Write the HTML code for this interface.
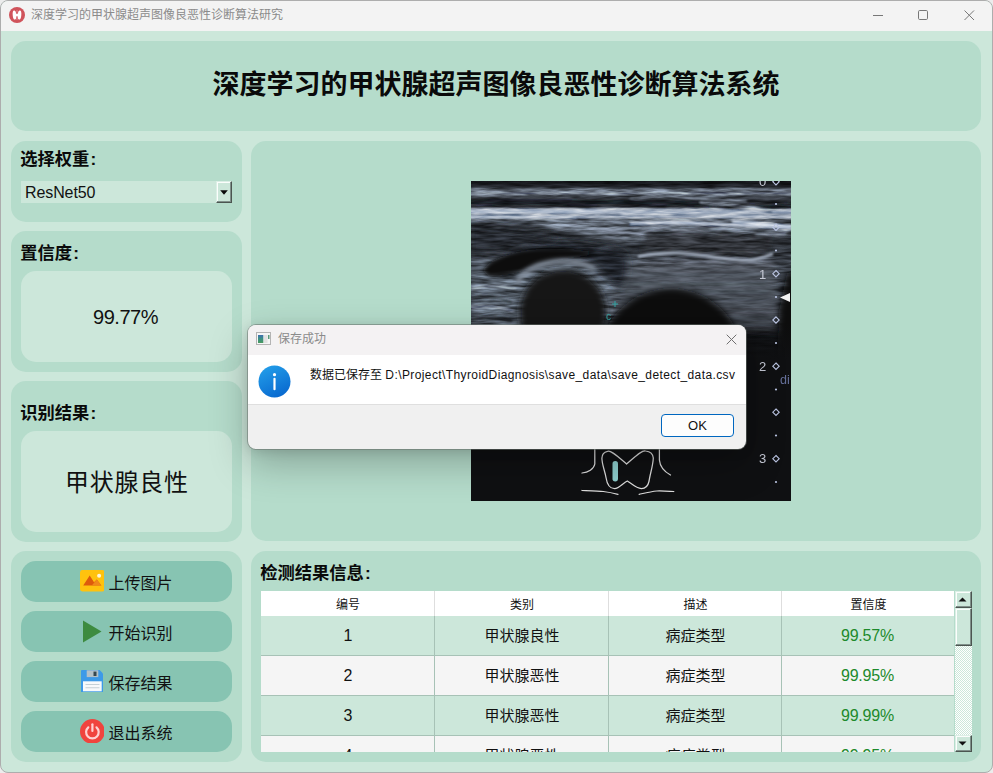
<!DOCTYPE html>
<html lang="zh-CN">
<head>
<meta charset="utf-8">
<title>深度学习的甲状腺超声图像良恶性诊断算法研究</title>
<style>
html,body{margin:0;padding:0;}
body{width:993px;height:773px;overflow:hidden;background:#ececec;font-family:"Liberation Sans","Noto Sans CJK SC",sans-serif;color:#000;}
#win{position:absolute;left:0;top:0;width:991px;height:771px;border:1px solid #adadad;border-radius:8px;background:#cce7da;overflow:hidden;}
.abs{position:absolute;}
#tbar{position:absolute;left:0;top:0;width:991px;height:30px;background:#f3f3f3;}
#ttext{position:absolute;left:30px;top:0;height:30px;line-height:29px;font-size:12px;color:#8b8b8b;white-space:nowrap;}
.panel{position:absolute;background:#b5dccb;border-radius:15px;}
.lbl i{font-style:normal;margin-left:1.200px;}
.lbl{position:absolute;font-weight:bold;font-size:17.300px;margin-left:-.8px;line-height:20px;white-space:nowrap;color:#0a0a0a;}
.inner{position:absolute;background:#cce7da;border-radius:15px;text-align:center;white-space:nowrap;}
.btn{position:absolute;left:20px;width:211px;height:41px;background:#87c4b2;border-radius:15px;}
.btn span{position:absolute;left:87.500px;top:1px;line-height:43px;font-size:16px;white-space:nowrap;color:#111;}
.btn svg{position:absolute;}
#title{position:absolute;left:0;top:0;width:970px;height:90px;line-height:88px;text-align:center;font-weight:bold;font-size:27px;color:#0a0a0a;white-space:nowrap;}
/* table */
#tbl{position:absolute;left:260px;top:590px;width:693px;height:161px;overflow:hidden;background:#cce7da;}
.th{position:absolute;top:0;height:25px;line-height:28px;background:#fff;font-size:12px;text-align:center;color:#111;}
.row{position:absolute;left:0;width:694px;height:39px;border-bottom:1px solid #a7c2b6;}
.row.a{background:#cce7da;}
.row.b{background:#f5f5f5;}
.cell{position:absolute;top:0;height:39px;line-height:39px;text-align:center;font-size:15px;color:#111;white-space:nowrap;}
.cell.g{color:#1d8a2b;font-size:16px;letter-spacing:-.2px;text-indent:-2px;}
.vl{position:absolute;top:25px;width:1px;height:136px;background:#a7c2b6;}
.hl{position:absolute;top:0;width:1px;height:25px;background:#dedede;}
.cell.n{font-size:16px;}
/* scrollbar */
#sb{position:absolute;left:954px;top:590px;width:17px;height:161px;background:repeating-conic-gradient(#ffffff 0% 25%, #cce7da 0% 50%) 0 0/2px 2px;}
.sbb{position:absolute;left:0;width:15px;background:#cce7da;border:1px solid;border-color:#dcefe6 #4b5550 #4b5550 #dcefe6;box-shadow:inset -1px -1px 0 #80908a,inset 1px 1px 0 #fbfefc;}
/* dialog */
#dlg{position:absolute;left:247px;top:324px;width:498px;height:124px;border-radius:8px;background:#f0f0f0;overflow:hidden;box-shadow:0 0 0 1px rgba(105,115,110,.55),0 14px 38px rgba(0,0,0,.26),0 2px 12px rgba(0,0,0,.12);}
#dtb{position:absolute;left:0;top:0;width:498px;height:30px;background:#f4f2f3;}
#dbody{position:absolute;left:0;top:30px;width:498px;height:49px;background:#fff;border-bottom:1px solid #dfdfdf;}
#dmsg{position:absolute;left:62px;top:0;line-height:40px;font-size:12px;white-space:nowrap;color:#111;letter-spacing:0px;}
#ok{position:absolute;left:413px;top:89px;width:71px;height:21px;border:1px solid #0067c0;border-radius:4px;background:#fdfdfd;text-align:center;line-height:21px;font-size:13px;color:#111;}
</style>
</head>
<body>
<div id="win">
  <div id="tbar">
    <svg class="abs" style="left:7px;top:5px" width="18" height="18" viewBox="0 0 18 18">
      <circle cx="9" cy="9" r="8" fill="#d0535b"/>
      <g fill="#fff">
        <ellipse cx="6.500" cy="9" rx="1.800" ry="4.600" transform="rotate(-5 6.500 9)"/>
        <ellipse cx="11.500" cy="9" rx="1.800" ry="4.600" transform="rotate(5 11.500 9)"/>
        <path d="M6.500 6.600 L9 8 L11.500 6.600 V11.400 L9 10 L6.500 11.400z"/>
      </g>
      <path d="M9 4.200v2.400M9 11.600v2.400" stroke="#e9a0a4" stroke-width=".8"/>
    </svg>
    <div id="ttext">深度学习的甲状腺超声图像良恶性诊断算法研究</div>
    <svg class="abs" style="left:860px;top:0" width="131" height="30" viewBox="0 0 131 30" fill="none" stroke="#777" stroke-width="1">
      <path d="M12 14.500h10"/>
      <rect x="57.500" y="9.500" width="9" height="9" rx="1.200"/>
      <path d="M103.500 9.500l9.500 9.500M113 9.500l-9.500 9.500"/>
    </svg>
  </div>

  <!-- header -->
  <div class="panel" style="left:10px;top:40px;width:970px;height:90px;">
    <div id="title">深度学习的甲状腺超声图像良恶性诊断算法系统</div>
  </div>

  <!-- left 1 -->
  <div class="panel" style="left:10px;top:140px;width:231px;height:81px;">
    <div class="lbl" style="left:10px;top:8px;">选择权重<i>:</i></div>
    <div class="abs" style="left:10px;top:40px;width:211px;height:22px;background:#cce7da;">
      <div class="abs" style="left:4px;top:0;line-height:24px;font-size:16px;color:#111;letter-spacing:-.1px;">ResNet50</div>
      <div class="abs" style="left:195px;top:0;width:14px;height:20px;background:#cce7da;border:1px solid;border-color:#dcefe6 #4b5550 #4b5550 #dcefe6;box-shadow:inset -1px -1px 0 #80908a,inset 1px 1px 0 #fbfefc;">
        <svg class="abs" style="left:2.500px;top:7.500px" width="8" height="5" viewBox="0 0 8 5"><path d="M0.200 0.300h7.600L4 4.700z" fill="#0a0a0a"/></svg>
      </div>
    </div>
  </div>

  <!-- left 2 -->
  <div class="panel" style="left:10px;top:230px;width:231px;height:141px;">
    <div class="lbl" style="left:10px;top:12px;">置信度<i>:</i></div>
    <div class="inner" style="left:10px;top:40px;width:211px;height:91px;line-height:92px;font-size:20px;letter-spacing:-.5px;text-indent:-2px;color:#111;">99.77%</div>
  </div>

  <!-- left 3 -->
  <div class="panel" style="left:10px;top:380px;width:231px;height:161px;">
    <div class="lbl" style="left:10px;top:21.500px;">识别结果<i>:</i></div>
    <div class="inner" style="left:10px;top:50px;width:211px;height:101px;line-height:104px;font-size:24px;letter-spacing:.8px;padding-left:.8px;width:210.200px;color:#111;">甲状腺良性</div>
  </div>

  <!-- left 4 buttons -->
  <div class="panel" style="left:10px;top:550px;width:231px;height:211px;">
    <div class="btn" style="left:10px;top:10px;">
      <svg style="left:58.700px;top:9.300px" width="24.800" height="21.400" viewBox="0 0 24.800 21.400">
        <rect x="0" y="0" width="24.800" height="21.400" rx="2.400" fill="#ffc20e"/>
        <path d="M3.200 15.600L9.700 5.600l4.300 6.600 2.800-2.600 4.600 6z" fill="#de5b0c"/>
        <path d="M11.800 15.600l5-6 4.600 6z" fill="#f0891a"/>
        <circle cx="19.100" cy="5.700" r="2" fill="#fff6dc"/>
      </svg>
      <span>上传图片</span>
    </div>
    <div class="btn" style="left:10px;top:60px;">
      <svg style="left:60.500px;top:8.600px" width="20" height="23" viewBox="0 0 20 23"><path d="M1 0.500L19.500 11.500 1 22.500z" fill="#3d8b40"/></svg>
      <span>开始识别</span>
    </div>
    <div class="btn" style="left:10px;top:110px;">
      <svg style="left:59.700px;top:8.700px" width="22.600" height="22.400" viewBox="0 0 22.600 22.400">
        <path d="M1 0h17.600l4 4V21.400a1 1 0 0 1-1 1H1a1 1 0 0 1-1-1V1a1 1 0 0 1 1-1z" fill="#3d9ae8"/>
        <rect x="5.700" y="0.300" width="11.600" height="6.800" fill="#b4c1c8"/>
        <rect x="12.500" y="1.600" width="3" height="4.400" fill="#37474f"/>
        <rect x="2" y="11.300" width="18.700" height="10" fill="#f7f9fb"/>
        <path d="M4.500 14.500h14M4.500 17.700h14" stroke="#c5d0d6" stroke-width="1.100"/>
      </svg>
      <span>保存结果</span>
    </div>
    <div class="btn" style="left:10px;top:160px;">
      <svg style="left:58.700px;top:7.500px" width="24.800" height="24.800" viewBox="0 0 26 26">
        <circle cx="13" cy="13" r="13" fill="#f0443e"/>
        <path d="M8.700 8.700a6.600 6.600 0 1 0 8.600 0" fill="none" stroke="#ffd2d2" stroke-width="2.300" stroke-linecap="round"/>
        <path d="M13 5.600v7" stroke="#ffd2d2" stroke-width="2.300" stroke-linecap="round"/>
      </svg>
      <span>退出系统</span>
    </div>
  </div>

  <!-- right image panel -->
  <div class="panel" style="left:250px;top:140px;width:730px;height:400px;"></div>
  <svg id="us" class="abs" style="left:470px;top:180px" width="320" height="320" viewBox="0 0 320 320">
    <defs>
      <filter id="b1" filterUnits="userSpaceOnUse" x="-40" y="-40" width="400" height="400"><feGaussianBlur stdDeviation="0.800"/></filter>
      <filter id="b2" filterUnits="userSpaceOnUse" x="-40" y="-40" width="400" height="400"><feGaussianBlur stdDeviation="2"/></filter>
      <filter id="b3" filterUnits="userSpaceOnUse" x="-40" y="-40" width="400" height="400"><feGaussianBlur stdDeviation="3.500"/></filter>
      <filter id="b6" filterUnits="userSpaceOnUse" x="-40" y="-40" width="400" height="400"><feGaussianBlur stdDeviation="6"/></filter>
      <filter id="spo" x="0" y="0" width="100%" height="100%" color-interpolation-filters="sRGB">
        <feTurbulence type="fractalNoise" baseFrequency="0.040 0.300" numOctaves="3" seed="7"/>
        <feColorMatrix type="matrix" values="1.800 0 0 0 -0.400  1.800 0 0 0 -0.400  1.800 0 0 0 -0.400  0 0 0 0 1"/>
      </filter>
      <linearGradient id="ubg" x1="0" y1="0" x2="0" y2="1">
        <stop offset="0" stop-color="#121418"/>
        <stop offset="0.006" stop-color="#15171b"/>
        <stop offset="0.019" stop-color="#24272d"/>
        <stop offset="0.025" stop-color="#5a626e"/>
        <stop offset="0.040" stop-color="#7a8493"/>
        <stop offset="0.050" stop-color="#3a3f47"/>
        <stop offset="0.0625" stop-color="#24272d"/>
        <stop offset="0.081" stop-color="#2a2d33"/>
        <stop offset="0.0875" stop-color="#96a1b1"/>
        <stop offset="0.097" stop-color="#b4bfcf"/>
        <stop offset="0.106" stop-color="#8d98a8"/>
        <stop offset="0.1125" stop-color="#afbaca"/>
        <stop offset="0.119" stop-color="#6a7380"/>
        <stop offset="0.128" stop-color="#3f454e"/>
        <stop offset="0.144" stop-color="#2e3238"/>
        <stop offset="0.219" stop-color="#2a2e34"/>
        <stop offset="0.244" stop-color="#3f454e"/>
        <stop offset="0.344" stop-color="#3d434c"/>
        <stop offset="0.420" stop-color="#2e3239"/>
        <stop offset="0.470" stop-color="#121417"/>
        <stop offset="0.560" stop-color="#0d0e11"/>
        <stop offset="1" stop-color="#0c0d0f"/>
      </linearGradient>
      <linearGradient id="tg" gradientUnits="userSpaceOnUse" x1="0" y1="80" x2="0" y2="155">
        <stop offset="0" stop-color="#535963"/><stop offset=".7" stop-color="#474d56"/><stop offset=".9" stop-color="#33373e"/><stop offset="1" stop-color="#24272c"/>
      </linearGradient>
      <linearGradient id="dg" gradientUnits="userSpaceOnUse" x1="0" y1="142" x2="0" y2="178">
        <stop offset="0" stop-color="#0f1012" stop-opacity="0"/><stop offset="1" stop-color="#0f1012" stop-opacity="1"/>
      </linearGradient>
      <clipPath id="uc"><rect width="320" height="320"/></clipPath>
    </defs>
    <g clip-path="url(#uc)">
      <rect width="320" height="320" fill="url(#ubg)"/>
      <!-- brighter tissue under bands (centre/right) -->
      <path d="M60 39 C110 39 160 41 230 43 L320 47 L320 52 C260 53 200 56 165 62 C140 60 100 50 60 43z" fill="#6f7987" filter="url(#b2)" opacity=".900"/>
      <!-- extra dark/bright streaks -->
      <g filter="url(#b1)" fill="none" stroke-linecap="round">
        <path d="M0 21 C70 24 150 18 230 23 S300 26 320 24" stroke="#191b20" stroke-width="4"/>
        <path d="M160 17 C200 15 240 17 275 20" stroke="#6f7987" stroke-width="2"/>
        <path d="M230 21 C260 23 285 27 300 31" stroke="#8a95a5" stroke-width="2.500"/>
        <path d="M160 42.500 C200 40.500 250 43 320 47" stroke="#bcc7d9" stroke-width="3.500"/>
        <path d="M285 54 C295 53 305 54 315 52" stroke="#8d98a8" stroke-width="2.500"/>
        <path d="M175 41.500 C195 40 215 40.500 235 42" stroke="#c8d3e3" stroke-width="2.200"/>
        <path d="M262 40 C280 41 300 43 320 45" stroke="#c8d3e3" stroke-width="3"/>
        <path d="M0 30.500 C40 29 80 31 130 30" stroke="#c0cbdb" stroke-width="1.800"/>
        <path d="M0 36.500 C30 35.500 70 37 105 36.500" stroke="#bcc7d7" stroke-width="1.800"/>
        <path d="M150 33 C190 31.500 240 33 290 35" stroke="#b4bfcf" stroke-width="1.800"/>
        <path d="M40 66 C60 64 80 65 100 68" stroke="#505761" stroke-width="2.500"/>
      </g>
      <!-- muscle layer right (darker) -->
      <path d="M175 52 C220 50 270 52 300 56 L296 72 C260 78 215 70 170 70z" fill="#30343b" filter="url(#b2)"/>
      <!-- left echogenic region around dark circle -->
      <path d="M0 84 C25 76 60 72 95 77 C120 81 140 95 150 118 L150 150 L0 150z" fill="#59626e" filter="url(#b3)"/>
      <g filter="url(#b1)" fill="none" stroke-linecap="round">
        <path d="M0 108 C15 104 30 104 44 108" stroke="#7d8795" stroke-width="3"/>
        <path d="M0 118 C12 114 28 116 40 121" stroke="#33373e" stroke-width="3"/>
        <path d="M0 127 C15 124 30 126 42 130" stroke="#8791a0" stroke-width="3"/>
        <path d="M0 138 C15 135 30 137 40 140" stroke="#2b2f35" stroke-width="3"/>
      </g>
      <!-- thyroid tissue right -->
      <path d="M150 86 C190 76 240 78 300 80 L312 150 L140 150 L140 110z" fill="url(#tg)" filter="url(#b3)"/>
      <!-- dark muscle between circles -->
      <path d="M70 60 C100 62 130 66 152 70 C160 80 158 96 150 108 C140 104 134 92 122 82 C105 74 85 73 60 80 C40 84 30 80 40 72z" fill="#24272d" filter="url(#b3)"/>
      <path d="M0 46 C30 45 60 48 88 56 C70 66 30 70 0 72z" fill="#282b31" filter="url(#b3)" opacity=".800"/>
      <!-- speckle -->
      <rect width="320" height="178" filter="url(#spo)" style="mix-blend-mode:overlay" opacity=".550"/>
      
      <path d="M158 88 C190 80 240 82 300 84 L310 150 L150 150 L150 112z" fill="url(#tg)" filter="url(#b3)" opacity=".550"/>
      <!-- dark hypoechoic band -->
      <path d="M12 89 C20 75 55 66 90 68 C105 68 118 70 128 73 C102 76 82 80 66 85 C50 91 35 96 17 95z" fill="#0c0d10" filter="url(#b2)"/>
      <!-- bright rim over left circle -->
      <path d="M46 102 C56 80 100 74 124 88" fill="none" stroke="#828c9a" stroke-width="5" filter="url(#b2)"/>
      <!-- left dark circle -->
      <circle cx="92" cy="132" r="44" fill="#131519" filter="url(#b3)"/>
      <!-- bright fascia line -->
      <path d="M167 75.500 C185 72 200 71 216 72.500 C240 75 262 80 279 79.500 C288 78 295 75 302 73" fill="none" stroke="#a9b4c5" stroke-width="2.600" filter="url(#b1)"/>
      <!-- big dark circle right -->
      <path d="M170 108 C185 104 205 104 220 108" fill="none" stroke="#7a8492" stroke-width="2.500" filter="url(#b2)"/>
      <circle cx="200" cy="179" r="72" fill="#0a0b0d" filter="url(#b3)"/>
      <!-- right edge shadow -->
      <path d="M316 92 L340 86 L340 200 L306 200 L308 130z" fill="#0b0c0e" filter="url(#b3)"/>
      <!-- deep region darkness -->
      <rect x="0" y="142" width="320" height="37" fill="url(#dg)"/><rect x="0" y="178" width="320" height="142" fill="#0f1012"/>
      
      <!-- calipers -->
      <path d="M141 123h6M144 120v6" stroke="#35a3a3" stroke-width="1" fill="none"/>
      <text x="135" y="139" font-family="Liberation Sans, sans-serif" font-size="10" fill="#35a3a3">c</text>
      <!-- scale markers -->
      <g fill="none" stroke="#b9c3e0" stroke-width="1.100">
        <path d="M305 -2.500l3.200 3.200-3.200 3.200-3.200-3.200z"/>
        <path d="M305 43l3.200 3.200-3.200 3.200-3.200-3.200z"/>
        <path d="M305 89.500l3.200 3.200-3.200 3.200-3.200-3.200z"/>
        <path d="M305 135.800l3.200 3.200-3.200 3.200-3.200-3.200z"/>
        <path d="M305 182l3.200 3.200-3.200 3.200-3.200-3.200z"/>
        <path d="M305 228l3.200 3.200-3.200 3.200-3.200-3.200z"/>
        <path d="M305 274.500l3.200 3.200-3.200 3.200-3.200-3.200z"/>
      </g>
      <g fill="#b9c3e0">
        <circle cx="305" cy="23" r="1.100"/><circle cx="305" cy="69.500" r="1.100"/><circle cx="305" cy="116" r="1.100"/>
        <circle cx="305" cy="162" r="1.100"/><circle cx="305" cy="208.500" r="1.100"/><circle cx="305" cy="254.500" r="1.100"/><circle cx="305" cy="301" r="1.100"/>
      </g>
      <path d="M309 116.500l10-4.500v9z" fill="#f2f2f2"/>
      <g font-family="Liberation Sans, sans-serif" font-size="13" fill="#c4c8d4">
        <text x="288" y="5">0</text>
        <text x="288" y="98">1</text>
        <text x="288" y="190">2</text>
        <text x="288" y="282">3</text>
        <text x="284" y="328.500">15</text>
      </g>
      <text x="309" y="203" font-family="Liberation Sans, sans-serif" font-size="12.500" fill="#66719b">di</text>
      <!-- thyroid pictogram -->
      <g fill="none" stroke="#dcdcdc" stroke-width="1.250" stroke-linejoin="round" stroke-linecap="round">
        <path d="M123.800 266 V283 C123 288 117 291.500 111 292"/>
        <path d="M188.400 266 V279 C189 286 194 291 199.500 294"/>
        <path d="M136.500 270.300 C140 269 146 275 155.600 283 C165 275 171 269 174.600 270 C179 270.500 182 273 182.300 277 C182 285 179 293 178.100 300 C177 305 174 307.600 170.400 307.600 C165 307.600 160 302 156.300 300 C152 302 148 307.600 143.600 307.600 C139 307.600 136 303 135.100 297 C134 290 131 284 130.900 277.300 C131 273 133 271 136.500 270.300z"/>
        <path d="M111 309.500 C120 309.800 128 310 132.300 310.500 C138 311.200 143 312.300 147 313.300"/>
        <path d="M168.200 313.300 C174 312 180 310.500 185.900 310 C192 309.800 198 310.300 202.800 310.500"/>
      </g>
      <rect x="141.500" y="280" width="5.500" height="20.500" rx="2.700" fill="#8ecfce"/>
    </g>
  </svg>

  <!-- results panel -->
  <div class="panel" style="left:250px;top:550px;width:730px;height:211px;">
    <div class="lbl" style="left:10px;top:11.500px;">检测结果信息<i>:</i></div>
  </div>
  <div id="tbl">
    <div class="th" style="left:0;width:174px;">编号</div>
    <div class="th" style="left:174px;width:174px;">类别</div>
    <div class="th" style="left:348px;width:173px;">描述</div>
    <div class="th" style="left:521px;width:173px;">置信度</div>
    <div class="row a" style="top:25px;"><div class="cell n" style="left:0;width:174px;">1</div><div class="cell" style="left:174px;width:174px;">甲状腺良性</div><div class="cell" style="left:348px;width:173px;">病症类型</div><div class="cell g" style="left:521px;width:173px;">99.57%</div></div>
    <div class="row b" style="top:65px;"><div class="cell n" style="left:0;width:174px;">2</div><div class="cell" style="left:174px;width:174px;">甲状腺恶性</div><div class="cell" style="left:348px;width:173px;">病症类型</div><div class="cell g" style="left:521px;width:173px;">99.95%</div></div>
    <div class="row a" style="top:105px;"><div class="cell n" style="left:0;width:174px;">3</div><div class="cell" style="left:174px;width:174px;">甲状腺恶性</div><div class="cell" style="left:348px;width:173px;">病症类型</div><div class="cell g" style="left:521px;width:173px;">99.99%</div></div>
    <div class="row b" style="top:145px;"><div class="cell n" style="left:0;width:174px;">4</div><div class="cell" style="left:174px;width:174px;">甲状腺恶性</div><div class="cell" style="left:348px;width:173px;">病症类型</div><div class="cell g" style="left:521px;width:173px;">99.95%</div></div>
    <div class="vl" style="left:173px;"></div><div class="hl" style="left:173px;"></div><div class="hl" style="left:347px;"></div><div class="hl" style="left:520px;"></div>
    <div class="vl" style="left:347px;"></div>
    <div class="vl" style="left:520px;"></div>
  </div>
  <div id="sb">
    <div class="sbb" style="top:0;height:15px;"><svg class="abs" style="left:2px;top:5px" width="9" height="5" viewBox="0 0 9 5"><path d="M0.500 4.500h8L4.500 0.500z" fill="#111"/></svg></div>
    <div class="sbb" style="top:17px;height:36px;"></div>
    <div class="sbb" style="top:144px;height:15px;"><svg class="abs" style="left:2px;top:5px" width="9" height="5" viewBox="0 0 9 5"><path d="M0.500 0.500h8L4.500 4.500z" fill="#111"/></svg></div>
  </div>

  <!-- dialog -->
  <div id="dlg">
    <div id="dtb">
      <svg class="abs" style="left:8px;top:7px" width="15" height="13" viewBox="0 0 15 13">
        <defs><linearGradient id="wg" x1="0" y1="0" x2="0" y2="1"><stop offset="0" stop-color="#3f6fb0"/><stop offset=".45" stop-color="#3a8f86"/><stop offset="1" stop-color="#4a9a5e"/></linearGradient></defs>
        <rect x="0.500" y="0.500" width="14" height="12" fill="#f6f6f6" stroke="#b4b4b4"/>
        <rect x="2" y="3" width="5.500" height="8" fill="url(#wg)"/>
        <rect x="7.500" y="3" width="4" height="8" fill="#e2e2e2"/>
        <rect x="12" y="3" width="1.500" height="4" fill="#5a9a7a"/>
      </svg>
      <div class="abs" style="left:30px;top:0;line-height:29px;font-size:12px;color:#8b8b8b;white-space:nowrap;">保存成功</div>
      <svg class="abs" style="left:477.500px;top:8.500px" width="11" height="11" viewBox="0 0 11 11"><path d="M0.700 0.700l9.600 9.600M10.300 0.700l-9.600 9.600" stroke="#6f6f6f" stroke-width="1" fill="none"/></svg>
    </div>
    <div id="dbody">
      <svg class="abs" style="left:10px;top:10px" width="33" height="33" viewBox="0 0 33 33">
        <defs><linearGradient id="ig" x1="0.200" y1="0" x2="0.700" y2="1"><stop offset="0" stop-color="#239ee9"/><stop offset="1" stop-color="#0868cf"/></linearGradient></defs>
        <circle cx="16.500" cy="16.500" r="16" fill="url(#ig)"/>
        <rect x="15.400" y="12.700" width="2.200" height="12.600" rx="1.100" fill="#fff"/>
        <circle cx="16.500" cy="9.700" r="1.600" fill="#fff"/>
      </svg>
      <div id="dmsg">数据已保存至 <span style="letter-spacing:.4px">D:\Project\ThyroidDiagnosis\save_data\save_detect_data.csv</span></div>
    </div>
    <div id="ok">OK</div>
  </div>
</div>
</body>
</html>
